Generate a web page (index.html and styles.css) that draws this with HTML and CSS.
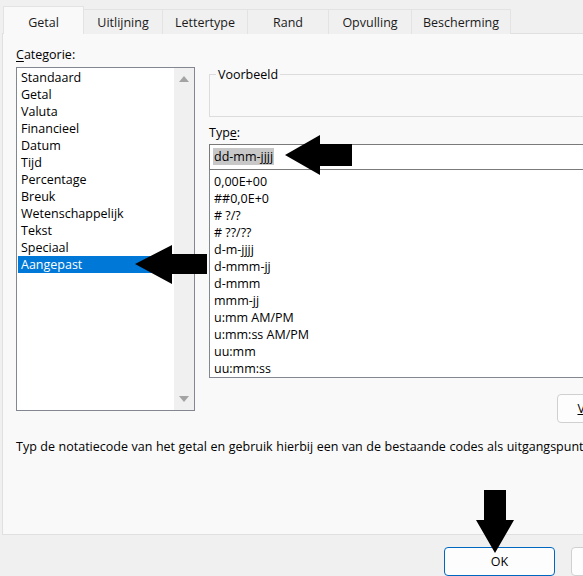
FILE: index.html
```html
<!DOCTYPE html>
<html lang="nl">
<head>
<meta charset="utf-8">
<title>Celeigenschappen</title>
<link rel="stylesheet" href="styles.css">
</head>
<body>
<div class="dialog">
  <div class="tabs">
    <div class="tab active t-getal">Getal</div>
    <div class="tab t-uit">Uitlijning</div>
    <div class="tab t-letter">Lettertype</div>
    <div class="tab t-rand">Rand</div>
    <div class="tab t-opv">Opvulling</div>
    <div class="tab t-besch">Bescherming</div>
  </div>
  <div class="panel">
    <div class="columns">
      <div class="left">
        <div class="label"><u>C</u>ategorie:</div>
        <div class="listbox">
          <ul class="cat-items">
            <li>Standaard</li>
            <li>Getal</li>
            <li>Valuta</li>
            <li>Financieel</li>
            <li>Datum</li>
            <li>Tijd</li>
            <li>Percentage</li>
            <li>Breuk</li>
            <li>Wetenschappelijk</li>
            <li>Tekst</li>
            <li>Speciaal</li>
            <li class="selected">Aangepast</li>
          </ul>
          <div class="scrollbar">
            <span class="sb-arrow up"></span>
            <span class="sb-arrow down"></span>
          </div>
        </div>
      </div>
      <div class="right">
        <div class="sample"><span class="legend">Voorbeeld</span></div>
        <div class="label type-label">Typ<u>e</u>:</div>
        <div class="input"><span class="sel">dd-mm-jjjj</span></div>
        <ul class="type-items">
          <li>0,00E+00</li>
          <li>##0,0E+0</li>
          <li># ?/?</li>
          <li># ??/??</li>
          <li>d-m-jjjj</li>
          <li>d-mmm-jj</li>
          <li>d-mmm</li>
          <li>mmm-jj</li>
          <li>u:mm AM/PM</li>
          <li>u:mm:ss AM/PM</li>
          <li>uu:mm</li>
          <li>uu:mm:ss</li>
        </ul>
        <div class="btn-row"><button class="btn del"><u>V</u>erwijderen</button></div>
      </div>
    </div>
    <p class="desc">Typ de notatiecode van het getal en gebruik hierbij een van de bestaande codes als uitgangspunt.</p>
  </div>
  <div class="footer">
    <button class="btn ok">OK</button>
    <button class="btn">Annuleren</button>
  </div>
  <svg class="arrows" width="583" height="576" viewBox="0 0 583 576">
    <polygon points="135,264 172,245 172,254 207,254 207,274 172,274 172,284" />
    <polygon points="285,155 320,135 320,144 352,144 352,166 320,166 320,175" />
    <polygon points="484,490 506,490 506,520 514,520 495,553 476,520 484,520" />
  </svg>
</div>
</body>
</html>
```
FILE: styles.css
```css
* { box-sizing: border-box; }
html, body {
  margin: 0;
  padding: 0;
  background: #f0f0f0;
}
body {
  font-family: "Open Sans", "Noto Sans", sans-serif;
  font-size: 12.5px;
  color: #000;
}
.dialog {
  position: relative;
  width: 583px;
  height: 576px;
  overflow: hidden;
  background: #f0f0f0;
}
.tabs {
  display: flex;
  align-items: flex-end;
  height: 34px;
  padding-left: 3px;
  margin-bottom: -1px;
  position: relative;
  z-index: 2;
}
.tab {
  flex-shrink: 0;
  height: 25px;
  border: 1px solid #e3e3e3;
  border-bottom: none;
  border-left: none;
  background: #f0f0f0;
  display: flex;
  align-items: center;
  justify-content: center;
  color: #1a1a1a;
  padding-top: 1px;
}
.tab.active {
  height: 28px;
  background: #f9f9f9;
  border-left: 1px solid #e3e3e3;
  padding-top: 3px;
}
.t-getal { width: 81px; }
.t-uit { width: 79px; }
.t-letter { width: 85px; }
.t-rand { width: 81px; }
.t-opv { width: 83px; }
.t-besch { width: 99px; }

.panel {
  margin-left: 2px;
  width: 640px;
  height: 502px;
  background: #f9f9f9;
  border: 1px solid #e0e0e0;
  padding: 13px 0 0 13px;
}
.columns {
  display: flex;
  align-items: flex-start;
  gap: 14px;
}
.left { width: 179px; flex-shrink: 0; }
.label {
  line-height: 16px;
  height: 16px;
}
.label u { text-underline-offset: 2px; }
.listbox {
  margin-top: 4px;
  height: 344px;
  border: 1px solid #828790;
  background: #fff;
  display: flex;
}
.cat-items {
  list-style: none;
  margin: 0;
  padding: 1px 0 0 1px;
  flex: 1;
}
.cat-items li {
  height: 17px;
  line-height: 17px;
  padding-left: 3px;
  white-space: nowrap;
}
.cat-items li.selected {
  background: #0078d7;
  color: #fff;
}
.scrollbar {
  width: 20px;
  background: #f0f0f0;
  display: flex;
  flex-direction: column;
  justify-content: space-between;
  align-items: center;
  padding: 8px 0 8px;
}
.sb-arrow {
  width: 0;
  height: 0;
  border-left: 5px solid transparent;
  border-right: 5px solid transparent;
}
.sb-arrow.up { border-bottom: 6px solid #a3a3a3; }
.sb-arrow.down { border-top: 6px solid #a3a3a3; }

.right {
  width: 400px;
  flex-shrink: 0;
  margin-top: 27px;
}
.sample {
  height: 43px;
  border: 1px solid #dcdcdc;
}
.legend {
  display: inline-block;
  margin: -7px 0 0 6px;
  padding: 0 2px;
  line-height: 14px;
  background: #f9f9f9;
  vertical-align: top;
}
.type-label { margin-top: 8px; }
.input {
  margin-top: 3px;
  height: 26px;
  border: 1px solid #7a7a7a;
  background: #fff;
  padding: 3px 0 0 3px;
}
.sel {
  display: inline-block;
  background: #c8c8c8;
  padding: 0 1px;
  line-height: 17px;
}
.type-items {
  list-style: none;
  margin: 0;
  height: 208px;
  border: 1px solid #828790;
  border-top: none;
  background: #fff;
  padding: 3px 0 0 4px;
}
.type-items li {
  height: 17px;
  line-height: 17px;
  white-space: nowrap;
}
.btn-row {
  margin-top: 16px;
  padding-left: 348px;
}
.btn {
  flex-shrink: 0;
  font-family: inherit;
  font-size: 12.5px;
  height: 29px;
  width: 111px;
  border: 1px solid #d0d0d0;
  border-radius: 4px;
  background: #fdfdfd;
  color: #000;
  padding: 0;
  text-align: center;
}
.desc {
  margin: 16px 0 0;
  line-height: 16px;
  white-space: nowrap;
  word-spacing: 0.3px;
}
.footer {
  display: flex;
  gap: 16px;
  padding: 12px 0 0 444px;
}
.btn.ok {
  border-color: #0067c0;
}
.arrows {
  position: absolute;
  left: 0;
  top: 0;
  fill: #000;
  z-index: 5;
}
```
